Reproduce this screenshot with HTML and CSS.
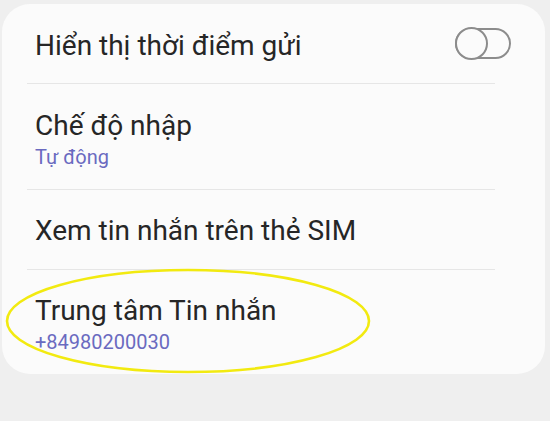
FILE: index.html
```html
<!DOCTYPE html>
<html lang="vi">
<head>
<meta charset="utf-8">
<link rel="stylesheet" href="styles.css">
</head>
<body>
<div class="card">
  <div class="row row-single row-first">
    <div class="text">
      <div class="title">Hiển thị thời điểm gửi</div>
    </div>
    <div class="toggle"><span class="knob"></span></div>
  </div>
  <div class="divider"></div>
  <div class="row row-double">
    <div class="text">
      <div class="title">Chế độ nhập</div>
      <div class="sub">Tự động</div>
    </div>
  </div>
  <div class="divider"></div>
  <div class="row row-single">
    <div class="text">
      <div class="title">Xem tin nhắn trên thẻ SIM</div>
    </div>
  </div>
  <div class="divider"></div>
  <div class="row row-double row-last">
    <div class="text">
      <div class="title">Trung tâm Tin nhắn</div>
      <div class="sub">+84980200030</div>
    </div>
    <svg class="highlight" width="370" height="110" viewBox="0 0 370 110">
      <ellipse cx="184" cy="54" rx="181" ry="51" fill="none" stroke="#f2ea10" stroke-width="2.6"/>
    </svg>
  </div>
</div>
</body>
</html>
```
FILE: styles.css
```css
html, body {
  margin: 0;
  padding: 0;
}
body {
  background: #efefef;
  width: 550px;
  height: 421px;
  overflow: hidden;
  font-family: Roboto, "Noto Sans", sans-serif;
}
.card {
  margin: 4px 5px 0 2px;
  background: #fbfbfb;
  border-radius: 28px;
  display: flex;
  flex-direction: column;
}
.row {
  display: flex;
  align-items: center;
  padding: 0 34px 0 33px;
  position: relative;
  box-sizing: border-box;
}
.row-single { height: 79px; padding-top: 2px; }
.row-first { padding-top: 4px; }
.row-double { height: 105px; padding-top: 4px; }
.row-last { height: 104px; padding-top: 3px; }
.text { flex: 1; }
.title {
  font-size: 28px;
  line-height: 33px;
  color: #262626;
}
.sub {
  margin-top: 4px;
  font-size: 20px;
  line-height: 22px;
  color: #6a6ac0;
}
.divider {
  height: 1px;
  background: #e6e6e6;
  margin: 0 50px 0 25px;
}
.toggle {
  width: 52px;
  height: 27px;
  border: 2px solid #8c8c8c;
  border-radius: 16px;
  position: relative;
  margin-top: -4px;
}
.knob {
  position: absolute;
  left: -2px;
  top: -3px;
  width: 29px;
  height: 29px;
  border: 2px solid #8c8c8c;
  border-radius: 50%;
  background: #fbfbfb;
}
.highlight {
  position: absolute;
  left: 2px;
  top: -3px;
}
```
